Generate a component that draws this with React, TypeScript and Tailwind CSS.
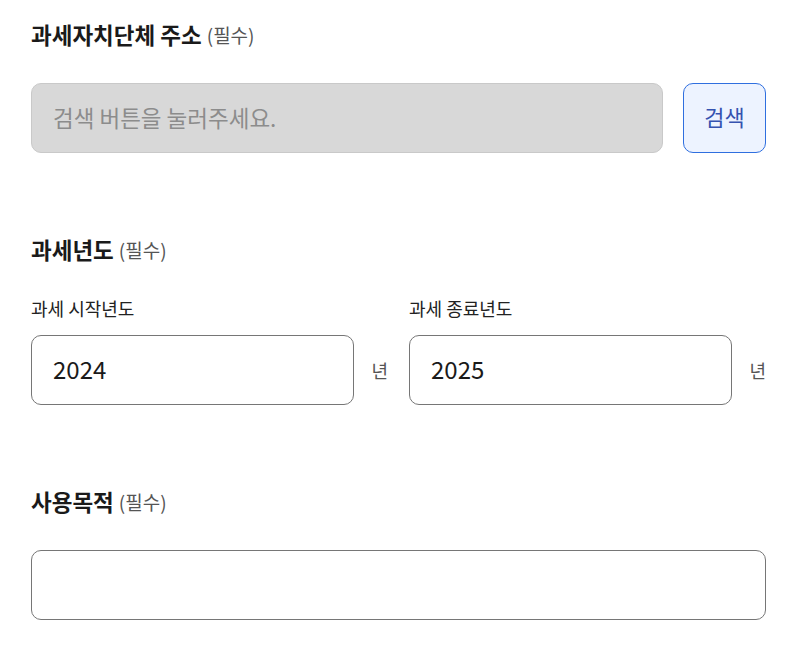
import React from "react";

const font = { fontFamily: '"Noto Sans CJK KR", "Noto Sans", sans-serif' };

function Title({ text }: { text: string }) {
  return (
    <div className="flex h-[24px] items-center gap-[5px] leading-none">
      <span className="text-[22.5px] font-bold text-[#1a1a1a]">{text}</span>
      <span className="text-[19px] text-[#555555]">(필수)</span>
    </div>
  );
}

export default function App() {
  return (
    <div
      className="w-[806px] h-[649px] bg-white pl-[31px] pr-[40px] pt-[22px]"
      style={font}
    >
      <Title text="과세자치단체 주소" />
      <div className="mt-[37px] flex gap-[20px]">
        <input
          disabled
          placeholder="검색 버튼을 눌러주세요."
          className="h-[70px] flex-1 rounded-[10px] border border-[#c9c9c9] bg-[#d8d8d8] px-[21px] pb-[3px] text-[22.5px] placeholder:text-[#8c8c8c] outline-none"
        />
        <button className="h-[70px] w-[83px] rounded-[10px] border border-[#2f6fdf] bg-[#edf3ff] pb-[3px] text-[22px] text-[#3552b0]">
          검색
        </button>
      </div>

      <div className="mt-[84px]">
        <Title text="과세년도" />
      </div>
      <div className="mt-[37px] grid grid-cols-2 gap-x-[21px]">
        {[
          ["과세 시작년도", "2024"],
          ["과세 종료년도", "2025"],
        ].map(([label, val]) => (
          <div key={label}>
            <div className="flex h-[20px] items-center text-[18px] leading-none text-[#222]">{label}</div>
            <div className="mt-[17px] flex items-center gap-[17px]">
              <input
                defaultValue={val}
                className="h-[70px] w-[324px] rounded-[10px] border border-[#767676] bg-white px-[21px] pb-[3px] text-[24px] text-[#1a1a1a] outline-none"
              />
              <span className="text-[18px] text-[#555555]">년</span>
            </div>
          </div>
        ))}
      </div>

      <div className="mt-[84px]">
        <Title text="사용목적" />
      </div>
      <div className="mt-[37px]">
        <input className="h-[70px] w-full rounded-[10px] border border-[#767676] bg-white px-[21px] text-[22px] outline-none" />
      </div>
    </div>
  );
}
